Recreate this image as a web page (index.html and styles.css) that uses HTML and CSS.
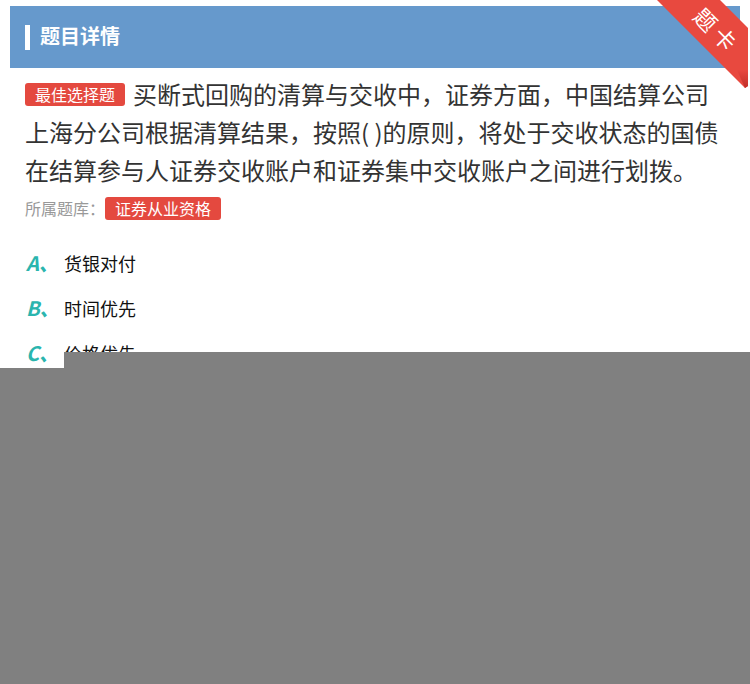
FILE: index.html
```html
<!DOCTYPE html>
<html lang="zh-CN">
<head>
<meta charset="utf-8">
<title>题目详情</title>
<link rel="stylesheet" href="styles.css">
</head>
<body>
<div class="page">
  <div class="header">
    <span class="header-bar"></span>
    <span class="header-title">题目详情</span>
  </div>
  <svg class="ribbon" width="100" height="92" viewBox="650 0 100 92" xmlns="http://www.w3.org/2000/svg">
    <defs>
      <linearGradient id="fold" x1="0" y1="0" x2="0" y2="1">
        <stop offset="0" stop-color="#e8473f"/>
        <stop offset="1" stop-color="#c02e28"/>
      </linearGradient>
    </defs>
    <polygon points="657,0 720,0 748,28 748,86 745,88" fill="#e8493f"/>
    <polygon points="737,70 748,70 748,86 745,88" fill="url(#fold)"/>
    <text x="718" y="30" transform="rotate(45 718 30)" text-anchor="middle" dominant-baseline="central" class="ribbon-text">题卡</text>
  </svg>

  <div class="question">
    <p class="stem"><span class="tag">最佳选择题</span>买断式回购的清算与交收中，证券方面，中国结算公司上海分公司根据清算结果，按照( )的原则，将处于交收状态的国债在结算参与人证券交收账户和证券集中交收账户之间进行划拨。</p>
    <div class="bank"><span class="bank-label">所属题库：</span><span class="tag">证券从业资格</span></div>
  </div>

  <ul class="options">
    <li class="option"><span class="letter">A、</span><span class="opt-text">货银对付</span></li>
    <li class="option"><span class="letter">B、</span><span class="opt-text">时间优先</span></li>
    <li class="option"><span class="letter">C、</span><span class="opt-text">价格优先</span></li>
  </ul>

  <div class="mask-top"></div>
  <div class="mask"></div>
</div>
</body>
</html>
```

FILE: styles.css
```css
* { box-sizing: border-box; }
html, body {
  margin: 0;
  padding: 0;
  background: #ffffff;
}
body {
  font-family: "Noto Sans CJK SC", "Noto Sans", "Liberation Sans", sans-serif;
  width: 750px;
  height: 684px;
  overflow: hidden;
}
.page {
  position: relative;
  width: 750px;
  height: 684px;
  padding-top: 6px;
}
.header {
  margin: 0 10px;
  height: 62px;
  background: #6699cc;
  display: flex;
  align-items: center;
  padding-left: 15px;
  padding-bottom: 3px;
}
.header-bar {
  width: 5px;
  height: 25px;
  background: #ffffff;
  margin-right: 10px;
  margin-top: 3px;
}
.header-title {
  color: #ffffff;
  font-size: 20px;
  font-weight: bold;
  line-height: 24px;
}
.ribbon {
  position: absolute;
  top: 0;
  right: 0;
}
.ribbon-text {
  fill: #ffffff;
  font-size: 22px;
  font-family: "Noto Sans CJK SC", sans-serif;
  letter-spacing: 5px;
}
.question {
  padding: 7px 25px 0;
  width: 750px;
}
.stem {
  margin: 0;
  font-size: 24px;
  line-height: 38px;
  color: #333333;
}
.tag {
  display: inline-block;
  background: #e4493f;
  color: #ffffff;
  font-size: 16px;
  line-height: 23px;
  height: 23px;
  padding: 0 10px;
  border-radius: 3px;
  vertical-align: 3px;
}
.stem .tag {
  margin-right: 8px;
}
.bank {
  display: flex;
  align-items: center;
  height: 24px;
  margin-top: 7px;
}
.bank-label {
  font-size: 16px;
  color: #999999;
}
.options {
  list-style: none;
  margin: 20px 0 0;
  padding: 0 0 0 26px;
}
.option {
  display: flex;
  align-items: center;
  height: 45px;
}
.letter {
  width: 38px;
  color: #2ab5ae;
  font-size: 20px;
  font-weight: bold;
  font-style: italic;
}
.opt-text {
  font-size: 18px;
  color: #111111;
}
.mask-top {
  position: absolute;
  left: 64px;
  top: 352px;
  width: 686px;
  height: 16px;
  background: #808080;
}
.mask {
  position: absolute;
  left: 0;
  top: 368px;
  width: 750px;
  height: 316px;
  background: #808080;
}
```
